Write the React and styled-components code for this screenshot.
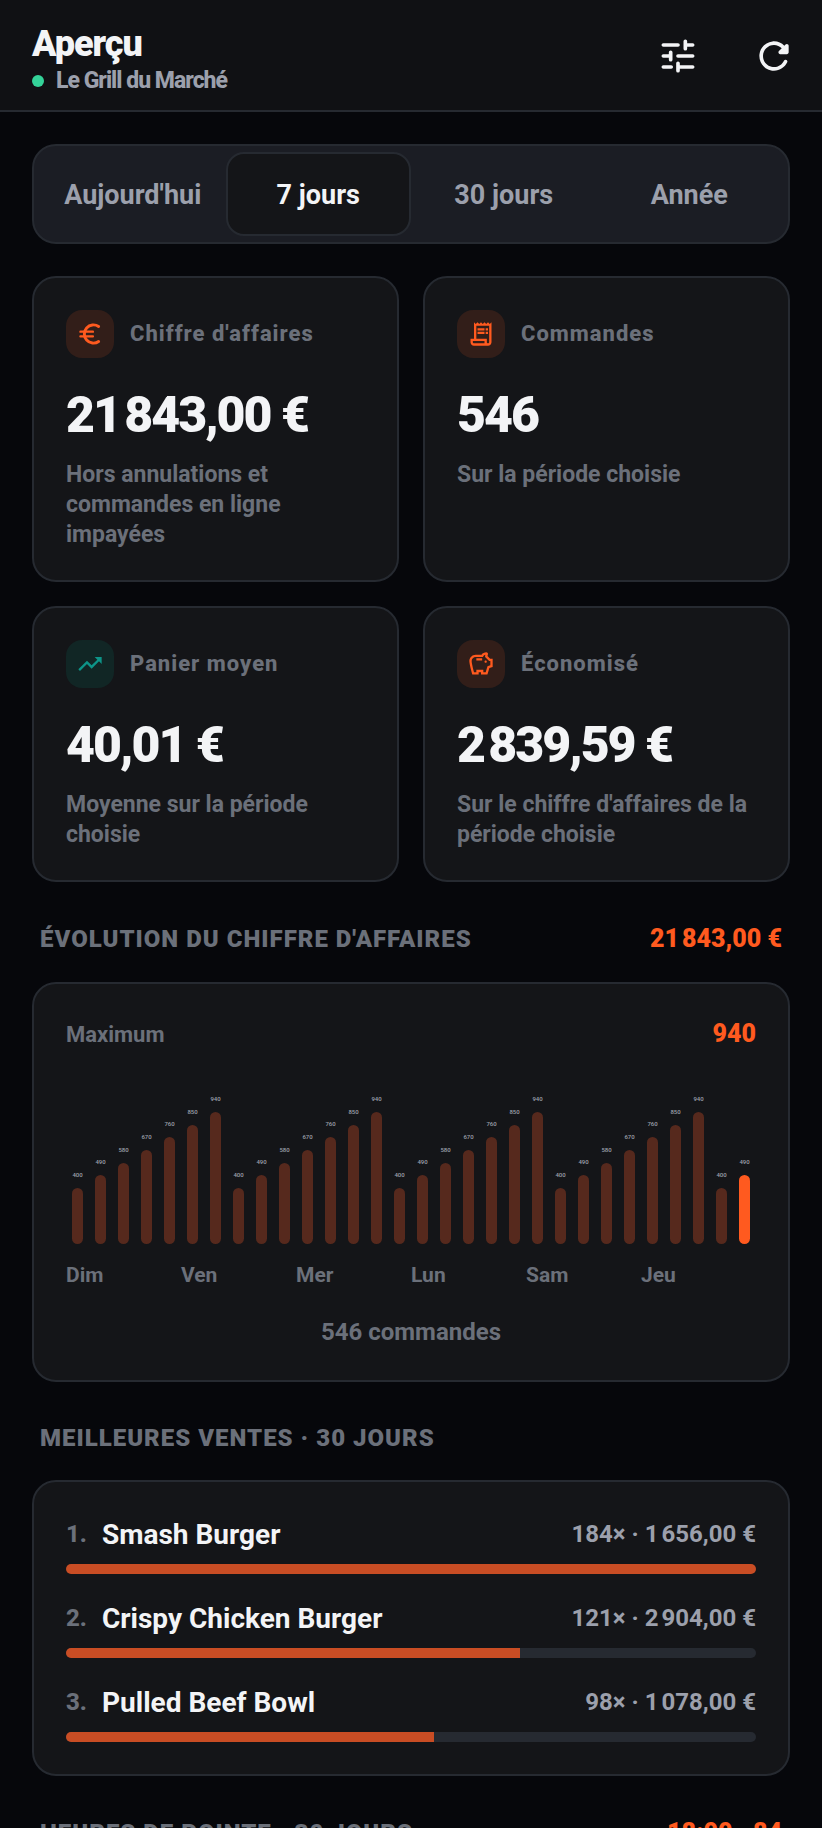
import React, { useState } from 'react';
import styled, { createGlobalStyle } from 'styled-components';
import { MdOutlineReceiptLong, MdTrendingUp, MdOutlineSavings } from 'react-icons/md';

const GlobalStyle = createGlobalStyle`
  :root {
    --background: #06070b;
    --header-color: #101114;
    --card-color: #141518;
    --track-color: #1b1d24;
    --border-color: #262a31;
    --text-color: #f3f4f6;
    --secondary-color: #9ca0ac;
    --muted-color: #6b707a;
    --primary-color: #ff5a1f;
  }

  * {
    box-sizing: border-box;
  }

  html,
  body,
  #root {
    height: 100%;
  }

  body {
    margin: 0;
    background-color: var(--background);
    color: var(--text-color);
    font-family: Roboto, sans-serif;
  }

  h1, h2, h3, p, ol {
    margin: 0;
    padding: 0;
  }

  button {
    font-family: inherit;
    cursor: pointer;
  }
`;

const Page = styled.div`
  height: 100%;
  display: flex;
  flex-direction: column;
  overflow: hidden;
`;

const Header = styled.header`
  flex: none;
  display: flex;
  align-items: center;
  justify-content: space-between;
  height: 112px;
  padding: 2px 8px 0 32px;
  background-color: var(--header-color);
  border-bottom: 2px solid var(--border-color);
`;

const Heading = styled.div`
  padding-top: 8px;
`;

const Title = styled.h1`
  font-size: 36px;
  line-height: 42px;
  font-weight: 900;
  letter-spacing: -1px;
`;

const Restaurant = styled.p`
  display: flex;
  align-items: center;
  gap: 12px;
  font-size: 23px;
  line-height: 32px;
  font-weight: 800;
  letter-spacing: -1px;
  color: var(--secondary-color);
`;

const StatusDot = styled.span`
  width: 12px;
  height: 12px;
  border-radius: 50%;
  background-color: #34d399;
`;

const Actions = styled.div`
  display: flex;
  gap: 16px;
`;

const IconButton = styled.button`
  display: flex;
  align-items: center;
  justify-content: center;
  width: 80px;
  height: 80px;
  padding: 0;
  border: none;
  background: none;
  color: var(--text-color);
`;

const Content = styled.main`
  flex: 1;
  min-height: 0;
  overflow: hidden;
  padding: 32px;
`;

const Periods = styled.div`
  display: grid;
  grid-template-columns: repeat(4, 1fr);
  height: 100px;
  padding: 6px;
  margin-bottom: 32px;
  background-color: var(--track-color);
  border: 2px solid var(--border-color);
  border-radius: 24px;
`;

const PeriodButton = styled.button`
  padding: 2px 0 0;
  border: 2px solid ${(props) => (props.$active ? 'var(--border-color)' : 'transparent')};
  border-radius: 18px;
  background-color: ${(props) => (props.$active ? 'var(--card-color)' : 'transparent')};
  color: ${(props) => (props.$active ? 'var(--text-color)' : 'var(--secondary-color)')};
  font-size: 27px;
  font-weight: 700;
`;

const Card = styled.section`
  padding: 32px;
  background-color: var(--card-color);
  border: 2px solid var(--border-color);
  border-radius: 24px;
`;

const StatCard = styled(Card)`
  padding-bottom: 30px;
`;

const StatGrid = styled.div`
  display: grid;
  grid-template-columns: repeat(2, 1fr);
  gap: 24px;
`;

const StatHead = styled.div`
  display: flex;
  align-items: center;
  gap: 16px;
  margin-bottom: 26px;
`;

const StatIcon = styled.span`
  display: flex;
  align-items: center;
  justify-content: center;
  width: 48px;
  height: 48px;
  border-radius: 16px;
  background-color: ${(props) => (props.$green ? '#112625' : '#321e19')};
  color: ${(props) => (props.$green ? '#0d9488' : 'var(--primary-color)')};
`;

const StatLabel = styled.h2`
  font-size: 22px;
  line-height: 28px;
  font-weight: 800;
  letter-spacing: 1px;
  color: var(--muted-color);
`;

const StatValue = styled.p`
  margin-bottom: 14px;
  font-size: 50px;
  line-height: 62px;
  font-weight: 900;
  letter-spacing: -2px;
`;

const Separator = styled.span`
  display: inline-block;
  margin-right: -2px;
`;

const StatHint = styled.p`
  font-size: 23px;
  line-height: 30px;
  font-weight: 700;
  color: var(--muted-color);
`;

const SectionHead = styled.div`
  display: flex;
  align-items: center;
  justify-content: space-between;
  padding: 42px 8px 28px;
`;

const SectionTitle = styled.h2`
  font-size: 24px;
  line-height: 28px;
  font-weight: 900;
  letter-spacing: 1px;
  text-transform: uppercase;
  color: var(--muted-color);
`;

const Highlight = styled.span`
  font-size: 25px;
  line-height: 30px;
  font-weight: 900;
  color: var(--primary-color);
`;

const ChartHead = styled.div`
  display: flex;
  align-items: center;
  justify-content: space-between;
  padding-top: 3px;
  font-size: 22px;
  font-weight: 700;
  color: var(--muted-color);
`;

const Bars = styled.div`
  display: flex;
  align-items: flex-end;
  height: 195px;
`;

const BarColumn = styled.div`
  flex: 1;
  display: flex;
  flex-direction: column;
  align-items: stretch;
  gap: 9px;
  padding: 0 6px;
  font-size: 6px;
  line-height: 8px;
  font-weight: 500;
  text-align: center;
  color: var(--secondary-color);
`;

const Bar = styled.div`
  border-radius: 6px;
  background-color: ${(props) => (props.$current ? 'var(--primary-color)' : '#56291d')};
`;

const Days = styled.div`
  display: grid;
  grid-template-columns: repeat(6, 1fr);
  margin-top: 17px;
  font-size: 21px;
  line-height: 28px;
  font-weight: 700;
  color: var(--muted-color);
`;

const ChartNote = styled.p`
  margin-top: 27px;
  font-size: 24px;
  line-height: 32px;
  font-weight: 700;
  text-align: center;
  color: var(--muted-color);
`;

const Ranking = styled.ol`
  display: flex;
  flex-direction: column;
  gap: 24px;
  list-style: none;
`;

const RankLine = styled.div`
  display: flex;
  align-items: center;
  height: 40px;
  margin-bottom: 10px;
  font-size: 24px;
  font-weight: 800;
  color: var(--muted-color);
`;

const Rank = styled.span`
  width: 36px;
`;

const Product = styled.h3`
  flex: 1;
  font-size: 28px;
  font-weight: 700;
  color: var(--text-color);
`;

const Sales = styled.span`
  font-weight: 700;
  color: var(--secondary-color);
`;

const Track = styled.div`
  height: 10px;
  border-radius: 5px;
  background-color: var(--border-color);
  overflow: hidden;
`;

const Fill = styled.div`
  height: 100%;
  background-color: #c94d24;
`;

const TuneIcon = () => (
  <svg width="44" height="44" viewBox="0 0 24 24" fill="none" stroke="currentColor" strokeWidth="2" strokeLinecap="round">
    <path d="M4 6H12M17 6H20M16 4V8M4 12H7M8 10V14M12 12H20M4 18H8.3M12 16V20M13 18H20" />
  </svg>
);

const RefreshIcon = () => (
  <svg width="44" height="44" viewBox="0 0 24 24" fill="currentColor">
    <path d="M17.65 6.35c-1.63-1.63-3.94-2.57-6.48-2.31-3.67.37-6.69 3.35-7.1 7.02C3.52 15.91 7.27 20 12 20c3.19 0 5.93-1.87 7.21-4.56.32-.67-.16-1.44-.9-1.44-.37 0-.72.2-.88.53-1.13 2.43-3.84 3.97-6.8 3.31-2.22-.49-4.01-2.3-4.48-4.52C5.31 9.44 8.26 6 12 6c1.66 0 3.14.69 4.22 1.78l-1.51 1.51c-.63.63-.19 1.71.7 1.71H19c.55 0 1-.45 1-1V6.41c0-.89-1.08-1.34-1.71-.71l-.64.65z" />
  </svg>
);

const EuroIcon = ({ size }) => (
  <svg width={size} height={size} viewBox="0 0 24 24" fill="none" stroke="currentColor" strokeWidth="2" strokeLinecap="round">
    <path d="M19.4 5.6A7.8 7.8 0 1 0 19.4 18.4" strokeWidth="2.5" />
    <path d="M3.8 10H14.5M3.8 14H14.5" />
  </svg>
);

const periods = ["Aujourd'hui", '7 jours', '30 jours', 'Année'];

const stats = [
  { icon: EuroIcon, label: "Chiffre d'affaires", value: '21\u202f843,00 €', hint: 'Hors annulations et commandes en ligne impayées' },
  { icon: MdOutlineReceiptLong, label: 'Commandes', value: '546', hint: 'Sur la période choisie' },
  { icon: MdTrendingUp, label: 'Panier moyen', value: '40,01 €', hint: 'Moyenne sur la période choisie', green: true },
  { icon: MdOutlineSavings, label: 'Économisé', value: '2\u202f839,59 €', hint: "Sur le chiffre d'affaires de la période choisie" },
];

const week = [400, 490, 580, 670, 760, 850, 940];
const revenue = Array.from({ length: 30 }, (_, i) => week[i % 7]);
const maxRevenue = Math.max(...revenue);
const barHeight = 132;

const days = ['Dim', 'Ven', 'Mer', 'Lun', 'Sam', 'Jeu'];

const products = [
  { name: 'Smash Burger', count: 184, total: '1\u202f656,00 €' },
  { name: 'Crispy Chicken Burger', count: 121, total: '2\u202f904,00 €' },
  { name: 'Pulled Beef Bowl', count: 98, total: '1\u202f078,00 €' },
];

const Amount = ({ value }) =>
  value.split('\u202f').map((part, i) => (
    <React.Fragment key={i}>
      {i > 0 && <Separator>{'\u202f'}</Separator>}
      {part}
    </React.Fragment>
  ));

const App = () => {
  const [period, setPeriod] = useState('7 jours');

  return (
    <Page>
      <GlobalStyle />
      <Header>
        <Heading>
          <Title>Aperçu</Title>
          <Restaurant>
            <StatusDot />
            Le Grill du Marché
          </Restaurant>
        </Heading>
        <Actions>
          <IconButton type="button" aria-label="Filtres">
            <TuneIcon />
          </IconButton>
          <IconButton type="button" aria-label="Actualiser">
            <RefreshIcon />
          </IconButton>
        </Actions>
      </Header>

      <Content>
        <Periods>
          {periods.map((name) => (
            <PeriodButton
              key={name}
              type="button"
              $active={name === period}
              aria-pressed={name === period}
              onClick={() => setPeriod(name)}
            >
              {name}
            </PeriodButton>
          ))}
        </Periods>

        <StatGrid>
          {stats.map(({ icon: Icon, label, value, hint, green }) => (
            <StatCard key={label}>
              <StatHead>
                <StatIcon $green={green}>
                  <Icon size={28} />
                </StatIcon>
                <StatLabel>{label}</StatLabel>
              </StatHead>
              <StatValue>
                <Amount value={value} />
              </StatValue>
              <StatHint>{hint}</StatHint>
            </StatCard>
          ))}
        </StatGrid>

        <SectionHead>
          <SectionTitle>Évolution du chiffre d'affaires</SectionTitle>
          <Highlight>{'21\u202f843,00 €'}</Highlight>
        </SectionHead>
        <Card>
          <ChartHead>
            <span>Maximum</span>
            <Highlight>{maxRevenue}</Highlight>
          </ChartHead>
          <Bars>
            {revenue.map((amount, i) => (
              <BarColumn key={i}>
                <span>{amount}</span>
                <Bar
                  $current={i === revenue.length - 1}
                  style={{ height: Math.round((amount / maxRevenue) * barHeight) }}
                />
              </BarColumn>
            ))}
          </Bars>
          <Days>
            {days.map((day) => (
              <span key={day}>{day}</span>
            ))}
          </Days>
          <ChartNote>546 commandes</ChartNote>
        </Card>

        <SectionHead>
          <SectionTitle>Meilleures ventes · 30 jours</SectionTitle>
        </SectionHead>
        <Card>
          <Ranking>
            {products.map(({ name, count, total }, i) => (
              <li key={name}>
                <RankLine>
                  <Rank>{i + 1}.</Rank>
                  <Product>{name}</Product>
                  <Sales>
                    {count}× · {total}
                  </Sales>
                </RankLine>
                <Track>
                  <Fill style={{ width: `${(count / products[0].count) * 100}%` }} />
                </Track>
              </li>
            ))}
          </Ranking>
        </Card>

        <SectionHead>
          <SectionTitle>Heures de pointe · 30 jours</SectionTitle>
          <Highlight>18:00 · 84</Highlight>
        </SectionHead>
      </Content>
    </Page>
  );
};

export default App;
